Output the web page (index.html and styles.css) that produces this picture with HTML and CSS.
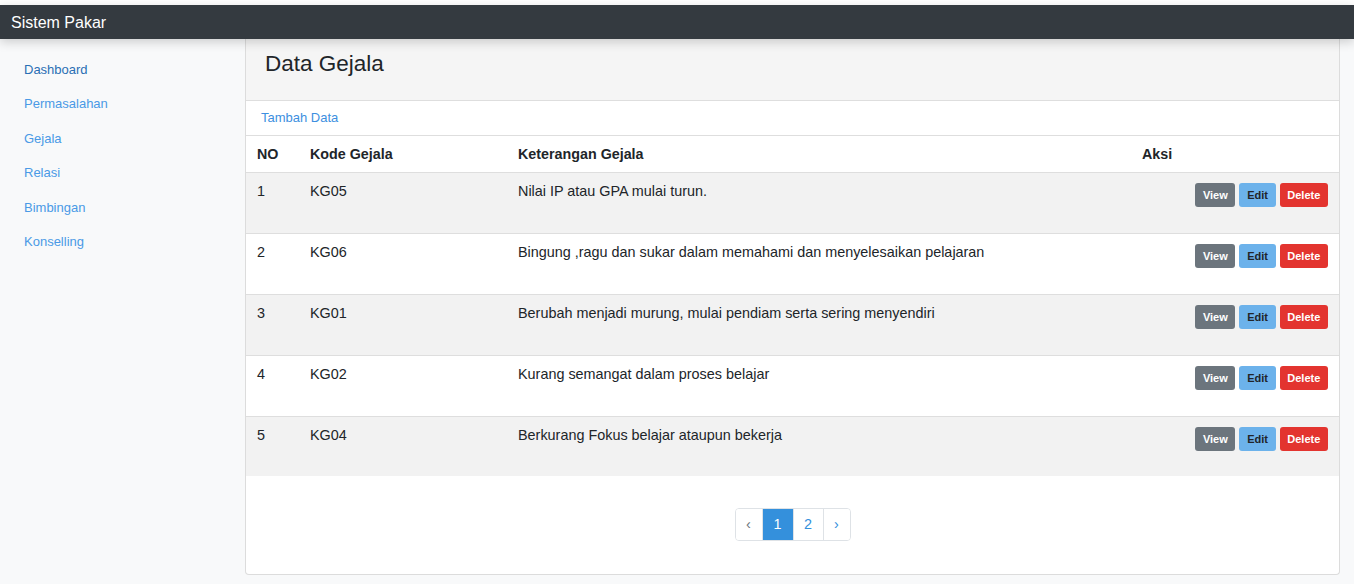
FILE: index.html
```html
<!DOCTYPE html>
<html lang="id">
<head>
<meta charset="utf-8">
<title>Sistem Pakar</title>
<link rel="stylesheet" href="styles.css">
</head>
<body>
<div class="topgap"></div>
<nav class="navbar"><span class="brand">Sistem Pakar</span></nav>
<div class="layout">
  <aside class="sidebar">
    <a class="nav-link active" href="#">Dashboard</a>
    <a class="nav-link" href="#">Permasalahan</a>
    <a class="nav-link" href="#">Gejala</a>
    <a class="nav-link" href="#">Relasi</a>
    <a class="nav-link" href="#">Bimbingan</a>
    <a class="nav-link" href="#">Konselling</a>
  </aside>
  <main class="main">
    <section class="card">
      <header class="card-header"><h1>Data Gejala</h1></header>
      <div class="toolbar"><a href="#" class="link">Tambah Data</a></div>
      <table class="table">
        <colgroup>
          <col class="c-no"><col class="c-kode"><col class="c-ket"><col class="c-aksi">
        </colgroup>
        <thead>
          <tr><th>NO</th><th>Kode Gejala</th><th>Keterangan Gejala</th><th class="th-aksi">Aksi</th></tr>
        </thead>
        <tbody>
          <tr><td>1</td><td>KG05</td><td>Nilai IP atau GPA mulai turun.</td><td class="actions"><a class="btn btn-view" href="#">View</a> <a class="btn btn-edit" href="#">Edit</a> <a class="btn btn-delete" href="#">Delete</a></td></tr>
          <tr><td>2</td><td>KG06</td><td>Bingung ,ragu dan sukar dalam memahami dan menyelesaikan pelajaran</td><td class="actions"><a class="btn btn-view" href="#">View</a> <a class="btn btn-edit" href="#">Edit</a> <a class="btn btn-delete" href="#">Delete</a></td></tr>
          <tr><td>3</td><td>KG01</td><td>Berubah menjadi murung, mulai pendiam serta sering menyendiri</td><td class="actions"><a class="btn btn-view" href="#">View</a> <a class="btn btn-edit" href="#">Edit</a> <a class="btn btn-delete" href="#">Delete</a></td></tr>
          <tr><td>4</td><td>KG02</td><td>Kurang semangat dalam proses belajar</td><td class="actions"><a class="btn btn-view" href="#">View</a> <a class="btn btn-edit" href="#">Edit</a> <a class="btn btn-delete" href="#">Delete</a></td></tr>
          <tr><td>5</td><td>KG04</td><td>Berkurang Fokus belajar ataupun bekerja</td><td class="actions"><a class="btn btn-view" href="#">View</a> <a class="btn btn-edit" href="#">Edit</a> <a class="btn btn-delete" href="#">Delete</a></td></tr>
        </tbody>
      </table>
      <nav class="pager">
        <ul class="pagination">
          <li class="page-item"><span class="page-link arrow muted">&lsaquo;</span></li>
          <li class="page-item"><span class="page-link current">1</span></li>
          <li class="page-item"><a class="page-link" href="#">2</a></li>
          <li class="page-item"><a class="page-link arrow" href="#">&rsaquo;</a></li>
        </ul>
      </nav>
    </section>
  </main>
</div>
</body>
</html>
```

FILE: styles.css
```css
* { box-sizing: border-box; }
html, body { margin: 0; padding: 0; }
body {
  background: #f8f9fa;
  font-family: "Liberation Sans", Arial, sans-serif;
  color: #212529;
  height: 584px;
  overflow: hidden;
}
.topgap { height: 5px; background: #ffffff; }
.navbar {
  height: 34px;
  background: #343a40;
  display: flex;
  align-items: center;
  padding: 1px 11px 0;
  position: relative;
  z-index: 2;
  box-shadow: 0 3px 10px rgba(0, 0, 0, 0.18);
}
.brand { color: #ffffff; font-size: 16px; }
.layout { display: flex; }
.sidebar {
  width: 245px;
  flex: none;
  display: flex;
  flex-direction: column;
  padding: 14px 0 0 24px;
}
.nav-link {
  font-size: 13px;
  line-height: 18px;
  padding: 8px 0;
  color: #4a9ae6;
  text-decoration: none;
  display: block;
  margin-bottom: 0.4px;
}
.nav-link.active { color: #2a6fb4; }
.main { flex: 1; padding: 0 14px 0 0; }
.card {
  background: #ffffff;
  border: 1px solid #dcdcdc;
  border-top: none;
  border-radius: 0 0 4px 4px;
  height: 536px;
}
.card-header {
  background: #f5f5f5;
  height: 62px;
  border-bottom: 1px solid #dedede;
  padding: 11px 19px 0;
}
.card-header h1 {
  margin: 0;
  font-size: 22.5px;
  line-height: 28px;
  font-weight: 400;
  color: #212529;
}
.toolbar {
  height: 35px;
  display: flex;
  align-items: center;
  padding: 0 15px;
  border-bottom: 1px solid #dedede;
}
.link { color: #3d8fe0; font-size: 13px; text-decoration: none; position: relative; top: -1px; }
.table { width: 100%; border-collapse: collapse; table-layout: fixed; font-size: 14.4px; }
.c-no { width: 53px; }
.c-kode { width: 208px; }
.c-ket { width: auto; }
.c-aksi { width: 208px; }
.table th {
  text-align: left;
  font-size: 14.3px;
  font-weight: 700;
  height: 36px;
  padding: 0 11px;
  border-bottom: 1px solid #dedede;
  color: #212529;
}
.table td {
  height: 61px;
  padding: 9px 11px 0;
  vertical-align: top;
  line-height: 18px;
  border-bottom: 1px solid #dedede;
  color: #212529;
}
.table tbody tr:nth-child(odd) td { background: #f2f2f2; }
.table tbody tr:last-child td { border-bottom: none; height: 60px; }
.actions { text-align: right; font-size: 0; }
.table td.actions { padding: 10px 11px 0 0; }
.btn {
  display: inline-block;
  height: 24px;
  line-height: 24px;
  font-size: 11px;
  font-weight: 700;
  padding: 0 7.7px;
  border-radius: 3px;
  text-decoration: none;
  margin-left: 4px;
}
.btn-view { background: #6c757d; color: #ffffff; }
.btn-edit { background: #6cb2eb; color: #212529; }
.btn-delete { background: #e3342f; color: #ffffff; }
.pager { display: flex; justify-content: center; padding-top: 32px; }
.pagination {
  list-style: none;
  margin: 0;
  padding: 0;
  display: flex;
  border: 1px solid #dee2e6;
  border-radius: 4px;
  overflow: hidden;
}
.page-item + .page-item .page-link { border-left: 1px solid #dee2e6; }
.page-link {
  display: block;
  height: 31px;
  line-height: 31px;
  width: 30px;
  text-align: center;
  font-size: 14.4px;
  color: #3490dc;
  text-decoration: none;
  background: #ffffff;
}
.page-item:nth-child(2) .page-link { width: 31px; }
.page-link.arrow { width: 27px; }
.page-item:first-child .page-link.arrow { width: 26px; }
.page-link.muted { color: #6c757d; }
.page-link.current { background: #3490dc; color: #ffffff; border-left-color: #3490dc; }
```
